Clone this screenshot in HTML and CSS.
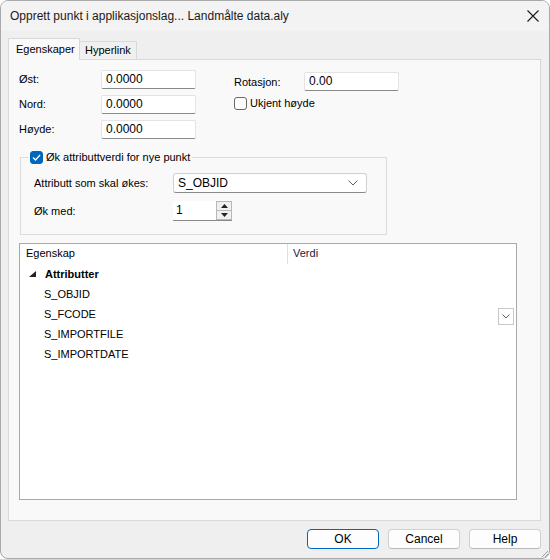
FILE: index.html
```html
<!DOCTYPE html>
<html lang="no">
<head>
    <meta charset="UTF-8">
    <title>Opprett punkt i applikasjonslag... Landmålte data.aly</title>
    <link rel="stylesheet" href="styles.css">
</head>
<body>
    <div class="window">
        <div class="titlebar">
            <span class="title">Opprett punkt i applikasjonslag... Landmålte data.aly</span>
            <svg class="close" width="12" height="12" viewBox="0 0 12 12">
                <path d="M0.5 0.5 L11.5 11.5 M11.5 0.5 L0.5 11.5" stroke="#1a1a1a" stroke-width="1.1" fill="none"/>
            </svg>
        </div>

        <div class="client">
            <div class="tabs">
                <div class="tab active">Egenskaper</div>
                <div class="tab">Hyperlink</div>
            </div>

            <div class="panel">
                <div class="top">
                    <div class="coords">
                        <label>Øst:</label>
                        <div class="input">0.0000</div>
                        <label>Nord:</label>
                        <div class="input">0.0000</div>
                        <label>Høyde:</label>
                        <div class="input">0.0000</div>
                    </div>
                    <div class="side">
                        <div class="row">
                            <label class="rot-label">Rotasjon:</label>
                            <div class="input">0.00</div>
                        </div>
                        <div class="check-row">
                            <span class="checkbox"></span>
                            <span>Ukjent høyde</span>
                        </div>
                    </div>
                </div>

                <fieldset class="group">
                    <legend class="check-row">
                        <span class="checkbox checked">
                            <svg width="9" height="7" viewBox="0 0 9 7">
                                <path d="M1 3.5 L3.5 6 L8 1" stroke="#fff" stroke-width="1.3" fill="none"/>
                            </svg>
                        </span>
                        <span>Øk attributtverdi for nye punkt</span>
                    </legend>
                    <div class="group-row">
                        <label class="group-label">Attributt som skal økes:</label>
                        <div class="combo">
                            <span>S_OBJID</span>
                            <svg width="10" height="6" viewBox="0 0 10 6">
                                <path d="M0.5 0.5 L5 5 L9.5 0.5" stroke="#606060" stroke-width="1" fill="none"/>
                            </svg>
                        </div>
                    </div>
                    <div class="group-row">
                        <label class="group-label">Øk med:</label>
                        <div class="spinner">
                            <span class="spin-value">1</span>
                            <div class="spin-buttons">
                                <div class="spin-btn">
                                    <svg width="7" height="4" viewBox="0 0 7 4"><path d="M0 4 L3.5 0 L7 4 Z" fill="#222"/></svg>
                                </div>
                                <div class="spin-btn">
                                    <svg width="7" height="4" viewBox="0 0 7 4"><path d="M0 0 L7 0 L3.5 4 Z" fill="#222"/></svg>
                                </div>
                            </div>
                        </div>
                    </div>
                </fieldset>

                <div class="grid">
                    <div class="grid-head">
                        <div class="col-name">Egenskap</div>
                        <div class="col-value">Verdi</div>
                    </div>
                    <div class="grid-row category">
                        <svg class="expander" width="7" height="6" viewBox="0 0 7 6"><path d="M7 0 L7 6 L0 6 Z" fill="#222"/></svg>
                        <span>Attributter</span>
                    </div>
                    <div class="grid-row">S_OBJID</div>
                    <div class="grid-row with-drop">
                        <span>S_FCODE</span>
                        <div class="drop">
                            <svg width="8" height="5" viewBox="0 0 8 5">
                                <path d="M0.5 0.5 L4 4 L7.5 0.5" stroke="#606060" stroke-width="1" fill="none"/>
                            </svg>
                        </div>
                    </div>
                    <div class="grid-row">S_IMPORTFILE</div>
                    <div class="grid-row">S_IMPORTDATE</div>
                </div>
            </div>

            <div class="footer">
                <button class="btn default">OK</button>
                <button class="btn">Cancel</button>
                <button class="btn">Help</button>
            </div>
            <svg class="grip" width="10" height="10" viewBox="0 0 10 10">
                <path d="M9 3 L3 9 M9 6 L6 9" stroke="#a0a0a0" stroke-width="1" fill="none"/>
            </svg>
        </div>
    </div>
</body>
</html>
```

FILE: styles.css
```css
* {
    margin: 0;
    padding: 0;
    box-sizing: border-box;
}

body {
    font-family: "Liberation Sans", Arial, sans-serif;
    font-size: 11px;
    color: #000;
    background: #fff;
}

.window {
    width: 550px;
    height: 559px;
    border: 1px solid #a9a9a9;
    border-radius: 8px;
    overflow: hidden;
    background: #efefef;
    display: flex;
    flex-direction: column;
}

/* title bar */
.titlebar {
    height: 30px;
    flex: none;
    display: flex;
    align-items: center;
    justify-content: space-between;
    padding: 0 10px 0 9px;
    background: #f3f3f3;
}

.title {
    font-family: "Liberation Sans", Arial, sans-serif;
    font-size: 12px;
    color: #1a1a1a;
}

/* dialog body */
.client {
    flex: 1;
    display: flex;
    flex-direction: column;
    padding-top: 6px;
}

.tabs {
    display: flex;
    align-items: flex-end;
    height: 22px;
    padding-left: 7px;
}

.tab {
    height: 18px;
    padding: 0 5px;
    line-height: 17px;
    border: 1px solid #d9d9d9;
    border-bottom: none;
    border-left: none;
    background: #f0f0f0;
    font-size: 11px;
}

.tab.active {
    height: 22px;
    line-height: 21px;
    padding: 0 6px 0 7px;
    width: 72px;
    border-left: 1px solid #d9d9d9;
    background: #f9f9f9;
    margin-bottom: -1px;
    position: relative;
}

.panel {
    margin: 0 8px 0 7px;
    height: 462px;
    border: 1px solid #d9d9d9;
    background: #f9f9f9;
    padding: 10px 0 0 10px;
}

/* coordinate fields */
.top {
    display: flex;
}

.coords {
    display: grid;
    grid-template-columns: 82px 95px;
    grid-auto-rows: 19px;
    row-gap: 6px;
    align-items: center;
}

.coords label {
    margin-top: -2px;
}

.input {
    height: 19px;
    background: #fff;
    border: 1px solid #e3e3e3;
    border-bottom-color: #8a8a8a;
    border-radius: 2px;
    padding: 0 4px;
    line-height: 17px;
    font-size: 12px;
}

.side {
    margin-left: 38px;
    padding-top: 2px;
    display: flex;
    flex-direction: column;
    gap: 4px;
}

.row {
    display: flex;
    align-items: center;
}

.rot-label {
    width: 70px;
}

.side .input {
    width: 95px;
}

.check-row {
    display: flex;
    align-items: center;
    gap: 3px;
    height: 16px;
}

.checkbox {
    width: 13px;
    height: 13px;
    border: 1px solid #666;
    border-radius: 3px;
    background: #fdfdfd;
    display: flex;
    align-items: center;
    justify-content: center;
}

.checkbox.checked {
    background: #0067c0;
    border-color: #0067c0;
}

/* increment group */
.group {
    width: 367px;
    height: 86px;
    margin: 10px 0 0 1px;
    border: 1px solid #dcdcdc;
    padding: 0 0 0 13px;
}

.group legend {
    margin-left: -6px;
    padding: 0 2px;
}

.group-row {
    display: flex;
    align-items: center;
    margin-top: 8px;
}

.group-label {
    width: 139px;
}

.combo {
    width: 194px;
    height: 20px;
    background: #fff;
    border: 1px solid #d0d0d0;
    border-bottom-color: #8a8a8a;
    border-radius: 3px;
    display: flex;
    align-items: center;
    justify-content: space-between;
    padding: 0 8px 0 4px;
    font-size: 12px;
}

.spinner {
    width: 59px;
    height: 20px;
    background: #fff;
    border-bottom: 1px solid #8a8a8a;
    display: flex;
    justify-content: space-between;
}

.spin-value {
    padding: 2px 0 0 3px;
    font-size: 12px;
}

.spin-buttons {
    width: 16px;
    display: flex;
    flex-direction: column;
    border: 1px solid #b8b8b8;
    border-bottom: none;
}

.spin-btn {
    flex: 1;
    background: #f0f0f0;
    display: flex;
    align-items: center;
    justify-content: center;
    border-bottom: 1px solid #b8b8b8;
}

/* property grid */
.grid {
    width: 498px;
    height: 257px;
    margin-top: 8px;
    background: #fff;
    border: 1px solid #a9a9a9;
}

.grid-head {
    display: flex;
    height: 20px;
}

.col-name {
    width: 267px;
    padding: 3px 0 0 6px;
}

.col-value {
    border-left: 1px solid #e0e0e0;
    padding: 3px 0 0 5px;
    color: #1a1a40;
}

.grid-row {
    height: 20px;
    display: flex;
    align-items: center;
    padding-left: 24px;
}

.grid-row.category {
    padding-left: 9px;
    font-weight: bold;
}

.expander {
    margin-right: 9px;
}

.grid-row.with-drop {
    justify-content: space-between;
    padding-right: 2px;
}

.drop {
    width: 16px;
    height: 17px;
    border: 1px solid #c8c8c8;
    background: #fff;
    display: flex;
    align-items: center;
    justify-content: center;
    margin-top: 5px;
}

/* buttons */
.footer {
    display: flex;
    justify-content: flex-end;
    gap: 9px;
    padding: 8px 8px 0 0;
}

.btn {
    width: 72px;
    height: 20px;
    font-family: "Liberation Sans", Arial, sans-serif;
    font-size: 12px;
    background: #fdfdfd;
    border: 1px solid #d0d0d0;
    border-bottom-color: #b8b8b8;
    border-radius: 4px;
    color: #000;
}

.btn.default {
    border: 1px solid #0067c0;
}

.grip {
    align-self: flex-end;
    margin-top: -1px;
}
```
